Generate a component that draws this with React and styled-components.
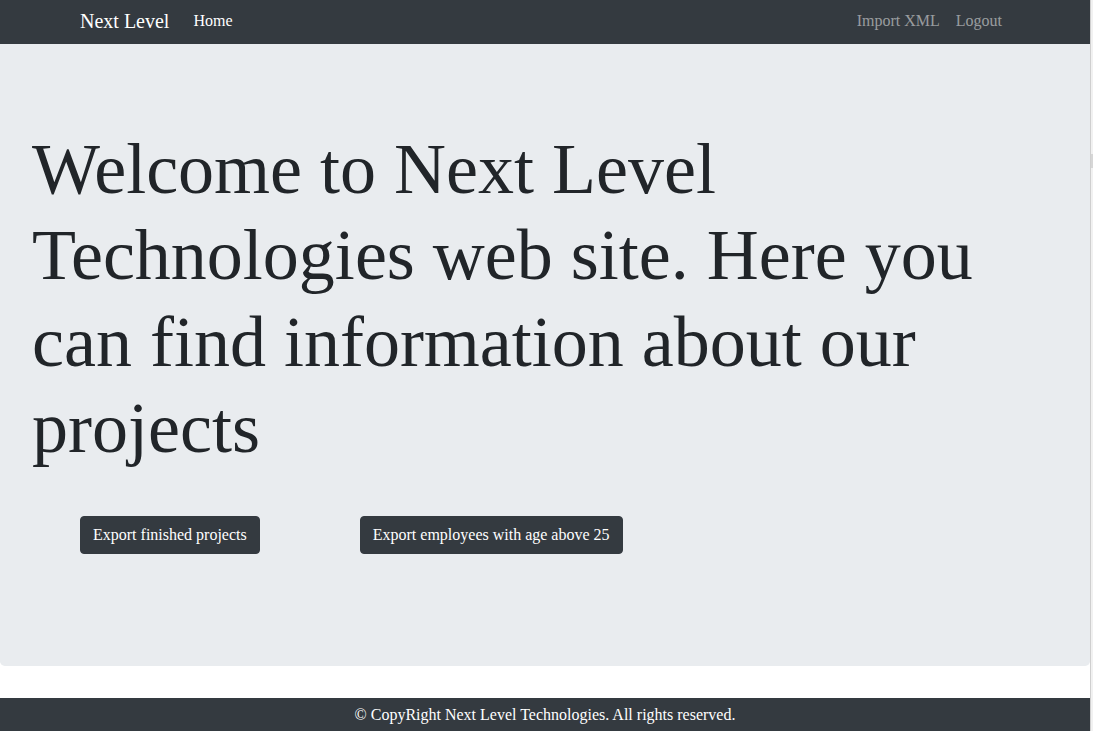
import React from "react";
import styled, { createGlobalStyle } from "styled-components";

const GlobalStyle = createGlobalStyle`
  html, body {
    margin: 0;
    padding: 0;
    background: #fff;
    overflow: hidden;
  }
  body {
    font-family: "Liberation Serif", "Times New Roman", serif;
    color: #212529;
    font-size: 16px;
    line-height: 1.5;
  }
  * { box-sizing: border-box; }
`;

function App() {
  return (
    <Shell>
      <GlobalStyle />
      <Page>
        <Nav>
          <NavInner>
            <NavGroup>
              <Brand href="#">Next Level</Brand>
              <NavLink href="#" active>Home</NavLink>
            </NavGroup>
            <NavGroup>
              <NavLink href="#">Import XML</NavLink>
              <NavLink href="#">Logout</NavLink>
            </NavGroup>
          </NavInner>
        </Nav>

        <Jumbotron>
          <Heading>
            Welcome to Next Level Technologies web site. Here you can find
            information about our projects
          </Heading>
          <ButtonRow>
            <DarkButton>Export finished projects</DarkButton>
            <DarkButton>Export employees with age above 25</DarkButton>
          </ButtonRow>
        </Jumbotron>

        <Footer>© CopyRight Next Level Technologies. All rights reserved.</Footer>
      </Page>
      <ScrollTrack>
        <Thumb />
      </ScrollTrack>
    </Shell>
  );
}

const Shell = styled.div`
  display: flex;
  width: 100%;
  height: 731px;
  overflow: hidden;
`;

const Page = styled.div`
  flex: 1;
  min-width: 0;
`;

const ScrollTrack = styled.div`
  position: relative;
  width: 3px;
  flex-shrink: 0;
  background: #f1f1f1;
  border-left: 1px solid #cfcfcf;
`;

const Thumb = styled.div`
  position: absolute;
  top: 154px;
  left: 0;
  width: 2px;
  height: 14px;
  background: #d6d6d6;
`;

const Nav = styled.nav`
  background: #343a40;
  height: 44px;
  padding-bottom: 3px;
  display: flex;
  align-items: center;
`;

const NavInner = styled.div`
  width: 100%;
  max-width: 960px;
  margin: 0 auto;
  padding: 0 15px;
  display: flex;
  align-items: center;
  justify-content: space-between;
`;

const NavGroup = styled.div`
  display: flex;
  align-items: center;
`;

const Brand = styled.a`
  font-size: 20px;
  color: #fff;
  text-decoration: none;
  margin-right: 16px;
  line-height: 1.5;
`;

const NavLink = styled.a`
  padding: 0 8px;
  font-size: 16px;
  color: ${(p) => (p.active ? "#fff" : "rgba(255, 255, 255, 0.5)")};
  text-decoration: none;
`;

const Jumbotron = styled.section`
  background: #e9ecef;
  border-radius: 0 0 4.8px 4.8px;
  padding: 82px 32px 112px;
  margin-bottom: 32px;
`;

const Heading = styled.h1`
  margin: 0 0 10px;
  font-size: 72px;
  font-weight: 300;
  line-height: 1.2;
  color: #212529;
`;

const ButtonRow = styled.div`
  display: flex;
  gap: 100px;
  margin: 44px 0 0 48px;
`;

const DarkButton = styled.button`
  font-family: "Liberation Serif", "Times New Roman", serif;
  font-size: 16px;
  line-height: 1.5;
  padding: 6px 12px;
  color: #fff;
  background: #343a40;
  border: 1px solid #343a40;
  border-radius: 4px;
  cursor: pointer;
`;

const Footer = styled.footer`
  background: #343a40;
  color: #fff;
  text-align: center;
  padding: 5px 0 8px;
  font-size: 16px;
  line-height: 1.5;
`;

export default App;
